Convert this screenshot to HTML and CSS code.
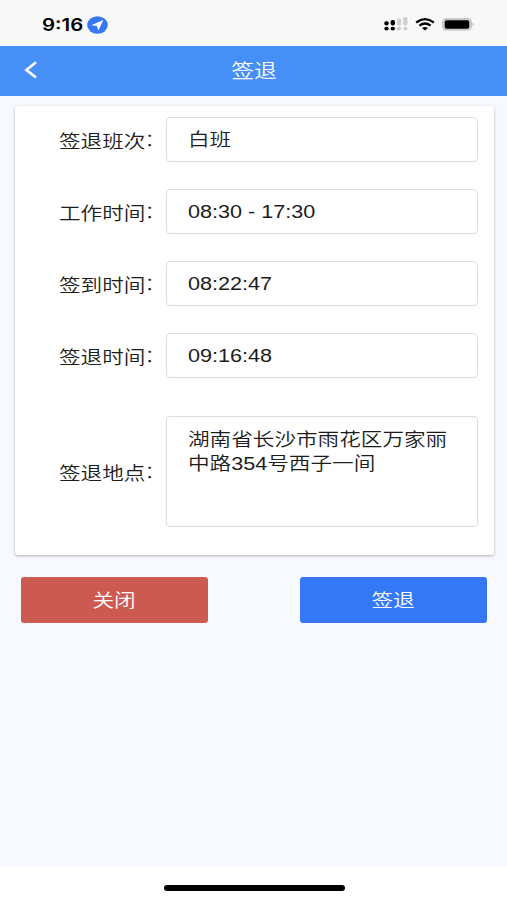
FILE: index.html
```html
<!DOCTYPE html>
<html lang="zh-CN">
<head>
  <meta charset="UTF-8">
  <meta name="viewport" content="width=device-width, initial-scale=1.0">
  <title>签退</title>
  <link rel="stylesheet" href="styles.css">
</head>
<body>
  <!-- 状态栏 -->
  <div class="status-bar">
    <span class="clock wide">9:16</span>
    <svg class="location" width="21" height="18" viewBox="0 0 21 18">
      <ellipse cx="10.5" cy="9" rx="10.3" ry="8.7" fill="#3478f6"/>
      <path d="M16.3 4 11.4 14.4 9.9 10 4.3 9.2Z" fill="#fff"/>
    </svg>
    <svg class="signal" width="24" height="15" viewBox="0 0 24 15">
      <g fill="#000">
        <rect x="0.3" y="4.2" width="4.4" height="4.2" rx="1.8"/>
        <rect x="6.6" y="3" width="4.4" height="5.4" rx="1.8"/>
        <ellipse cx="2.5" cy="11.6" rx="2.2" ry="1.9"/>
        <ellipse cx="8.8" cy="11.6" rx="2.2" ry="1.9"/>
      </g>
      <g fill="#cfcfcf">
        <rect x="13" y="1.6" width="4.2" height="6.8" rx="1.6"/>
        <rect x="19.2" y="0" width="4.2" height="8.4" rx="1.6"/>
        <ellipse cx="15.1" cy="11.6" rx="2.1" ry="1.9"/>
        <ellipse cx="21.3" cy="11.6" rx="2.1" ry="1.9"/>
      </g>
    </svg>
    <svg class="wifi" width="20" height="13" viewBox="0 0 20 13">
      <path d="M1.2 4.5Q10-2.2 18.8 4.5M4.4 7.6Q10 3.4 15.6 7.6" fill="none" stroke="#000" stroke-width="2.2"/>
      <path d="M7 10Q10 7.8 13 10L10 12.6Z" fill="#000"/>
    </svg>
    <svg class="battery" width="33" height="13" viewBox="0 0 33 13">
      <rect x="0.8" y="0.8" width="28.4" height="11.2" rx="3.6" fill="#d8d8d8" stroke="#b8b8b8" stroke-width="1.2"/>
      <rect x="2.7" y="2.2" width="24.6" height="8.6" rx="2" fill="#000"/>
      <path d="M30.6 4.5Q32.8 6.4 30.6 8.4Z" fill="#b4b4b4"/>
    </svg>
  </div>

  <!-- 导航栏 -->
  <div class="nav-bar">
    <svg class="back" width="14" height="18" viewBox="0 0 14 18">
      <path d="M12 1.3 2.4 8.9 12 16.5" fill="none" stroke="#fff" stroke-width="2.6"/>
    </svg>
    <h1 class="title"><span class="wide">签退</span></h1>
  </div>

  <div class="content">
    <div class="card">
      <div class="row">
        <div class="label"><span class="wide">签退班次<span class="colon">：</span></span></div>
        <div class="field"><span class="wide">白班</span></div>
      </div>
      <div class="row">
        <div class="label"><span class="wide">工作时间<span class="colon">：</span></span></div>
        <div class="field"><span class="wide">08:30 - 17:30</span></div>
      </div>
      <div class="row">
        <div class="label"><span class="wide">签到时间<span class="colon">：</span></span></div>
        <div class="field"><span class="wide">08:22:47</span></div>
      </div>
      <div class="row">
        <div class="label"><span class="wide">签退时间<span class="colon">：</span></span></div>
        <div class="field"><span class="wide">09:16:48</span></div>
      </div>
      <div class="row row-address">
        <div class="label"><span class="wide">签退地点<span class="colon">：</span></span></div>
        <div class="field address"><span class="wide">湖南省长沙市雨花区万家丽<br>中路354号西子一间</span></div>
      </div>
    </div>

    <div class="actions">
      <button class="btn btn-close"><span class="wide">关闭</span></button>
      <button class="btn btn-submit"><span class="wide">签退</span></button>
    </div>
  </div>

  <div class="home-area">
    <div class="home-bar"></div>
  </div>
</body>
</html>
```
FILE: styles.css
```css
* {
  box-sizing: border-box;
}
body {
  margin: 0;
  height: 900px;
  display: flex;
  flex-direction: column;
  overflow: hidden;
  background-color: #f8f8ff;
  color: #1c1c1c;
  font-family: "Liberation Sans", "Noto Sans CJK SC", sans-serif;
  font-size: 18px;
  font-weight: 350;
}
svg {
  display: block;
  flex: none;
}
/* 加宽字形 */
.wide {
  display: inline-block;
  white-space: nowrap;
  transform: scaleX(1.2);
  transform-origin: left center;
}
.status-bar {
  height: 46px;
  flex: none;
  display: flex;
  align-items: center;
  padding: 3px 32px 0 42px;
  background-color: #f8f8f8;
}
.clock {
  width: 45px;
  font-family: Inter, "Liberation Sans", sans-serif;
  font-size: 17px;
  font-weight: 600;
  color: #000;
}
.signal {
  margin-left: auto;
}
.wifi {
  margin-left: 7px;
}
.battery {
  margin-left: 7px;
}
.nav-bar {
  height: 50px;
  flex: none;
  display: grid;
  grid-template-columns: 40px 1fr 40px;
  align-items: center;
  background-color: #458ff7;
}
.back {
  margin-left: 24px;
  margin-bottom: 2px;
}
.title {
  margin: 0;
  padding: 2px 0 0 1px;
  color: #fff;
  font-size: 19px;
  font-weight: 350;
  line-height: 28px;
  text-align: center;
}
.title .wide,
.btn .wide {
  transform-origin: center;
}
.content {
  flex: 1;
  padding: 10px 13px 0 15px;
}
.card {
  height: 449px;
  padding: 11px 16px 0 44px;
  background-color: #fff;
  border-radius: 3px;
  box-shadow: 0 1px 3px rgba(0, 0, 0, 0.3);
}
.row {
  display: grid;
  grid-template-columns: 107px 1fr;
  align-items: center;
  margin-bottom: 27px;
}
.row-address {
  margin-top: 38px;
}
.label {
  padding-top: 5px;
  line-height: 26px;
}
.colon {
  margin-left: -1px;
  font-weight: 300;
  vertical-align: 2px;
  line-height: 1;
}
.field {
  height: 45px;
  padding: 9px 21px;
  border: 1.5px solid #dcdcdc;
  border-radius: 4px;
  line-height: 26px;
}
.address {
  height: 111px;
  padding-top: 11px;
  line-height: 24px;
}
.actions {
  display: flex;
  justify-content: space-between;
  padding: 22px 7px 0 6px;
}
.btn {
  width: 187px;
  height: 46px;
  padding: 0 1px 3px 0;
  border: none;
  border-radius: 3px;
  color: #fff;
  font-family: inherit;
  font-size: 18px;
  font-weight: 350;
}
.btn-close {
  background-color: #cd5a50;
}
.btn-submit {
  background-color: #3478f6;
}
.home-area {
  height: 33px;
  flex: none;
  display: flex;
  justify-content: center;
  padding: 18px 0 0 1px;
  background-color: #fff;
}
.home-bar {
  width: 181px;
  height: 6px;
  border-radius: 3px;
  background-color: #000;
}
```
